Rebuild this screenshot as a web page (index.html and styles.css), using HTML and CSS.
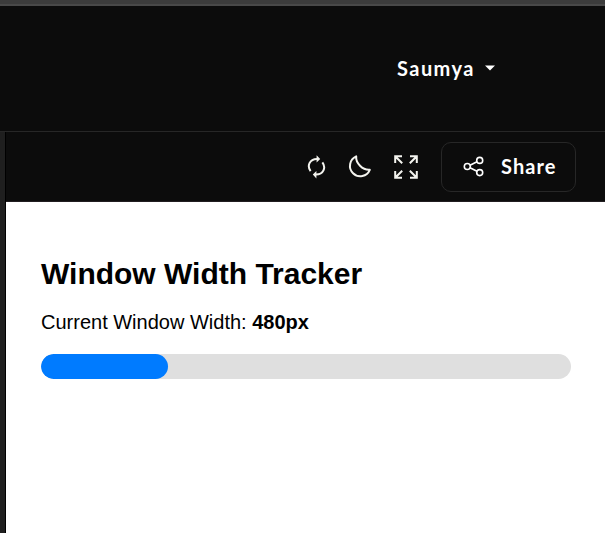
FILE: index.html
```html
<!DOCTYPE html>
<html lang="en">
<head>
<meta charset="utf-8">
<title>Window Width Tracker</title>
<link rel="stylesheet" href="styles.css">
</head>
<body>
<header class="header">
  <div class="user"><span>Saumya</span>
    <svg class="caret" width="10" height="6" viewBox="0 0 10 6"><path d="M0 .5h10L5 5.5z" fill="currentColor"/></svg>
  </div>
</header>
<div class="workspace">
  <div class="gutter"></div>
  <div class="pane">
    <nav class="toolbar">
      <svg class="refresh" width="20" height="24" viewBox="0 0 20 24" fill="none" stroke="currentColor" stroke-width="2">
        <path d="M3.6 16.2C-.2 11 2.4 4 10 4M15.4 7.4C19.2 12.6 16.6 19.6 9 19.6"/>
        <path d="M9.6 .2 13.2 4 9.6 7.6zM9.4 16 5.8 19.6 9.4 23.4z" fill="currentColor" stroke="none"/>
      </svg>
      <svg class="moon" width="24" height="24" viewBox="0 0 24 24" fill="none" stroke="currentColor" stroke-width="2" stroke-linejoin="round">
        <path d="M8.2 1.4C7.6 8 14.5 15.4 21.8 14.8A10.3 10.3 0 1 1 8.2 1.4z"/>
      </svg>
      <svg class="expand" width="24" height="24" viewBox="0 0 24 24" fill="none" stroke="currentColor" stroke-width="2">
        <path d="M1.2 8V1.2H8M1.2 1.2l7 7M16 1.2h6.8V8M22.8 1.2l-7 7M1.2 16v6.8H8M1.2 22.8l7-7M22.8 16v6.8H16M22.8 22.8l-7-7"/>
      </svg>
      <button class="share" type="button">
        <svg width="22" height="22" viewBox="0 0 22 22" fill="none" stroke="currentColor" stroke-width="1.6">
          <circle cx="4.3" cy="10.5" r="3"/><circle cx="16.7" cy="4.4" r="3"/><circle cx="16.7" cy="16.6" r="3"/>
          <path d="m7 9.2 7-3.5M7 11.8l7 3.5"/>
        </svg>
        <span>Share</span>
      </button>
    </nav>
    <main class="preview">
      <h1>Window Width Tracker</h1>
      <p>Current Window Width: <strong>480px</strong></p>
      <div class="track"><div class="fill"></div></div>
    </main>
  </div>
</div>
</body>
</html>
```
FILE: styles.css
```css
* { box-sizing: border-box; }
body {
  margin: 0;
  height: 533px;
  display: flex;
  flex-direction: column;
  overflow: hidden;
  background: #0c0c0c;
  color: #fff;
  font-family: Lato, sans-serif;
}
.header {
  flex: none;
  height: 132px;
  padding-left: 397px;
  display: flex;
  align-items: center;
  background: linear-gradient(#3c3c3c 4px, #494949 4px, #494949 6px, transparent 6px);
  border-bottom: 1px solid #272727;
}
.user {
  display: flex;
  align-items: center;
  gap: 10px;
  padding-top: 5px;
  font-size: 20px;
  font-weight: 700;
  letter-spacing: 1.45px;
}
.workspace { flex: 1; display: flex; }
.gutter { width: 6px; background: #1f1f1f; border-right: 1px solid #000; }
.pane { flex: 1; display: flex; flex-direction: column; }
.toolbar {
  height: 70px;
  padding-left: 301px;
  display: flex;
  align-items: center;
  border-bottom: 1px solid #211d20;
  color: #f4f4ef;
}
.refresh { margin-right: 21px; }
.moon { margin-right: 22px; }
.expand { margin-right: 23px; }
.share {
  width: 135px;
  height: 50px;
  padding: 0 0 0 21px;
  display: flex;
  align-items: center;
  gap: 16px;
  background: transparent;
  border: 1px solid #272727;
  border-radius: 10px;
  color: #fff;
  font: 700 20px Lato, sans-serif;
  letter-spacing: 1.1px;
}
.share span { padding-bottom: 2px; }
.preview {
  flex: 1;
  padding: 54px 34px 0 35px;
  background: #fff;
  color: #000;
  font-family: "Liberation Sans", Arial, sans-serif;
}
h1 { margin: 0; font-size: 30px; line-height: 36px; }
p { margin: 18px 0 0; font-size: 20px; line-height: 24px; }
.track {
  height: 25px;
  margin-top: 20px;
  overflow: hidden;
  background: #dfdfdf;
  border-radius: 13px;
}
.fill { width: 127px; height: 100%; border-radius: 13px; background: #007bff; }
```
